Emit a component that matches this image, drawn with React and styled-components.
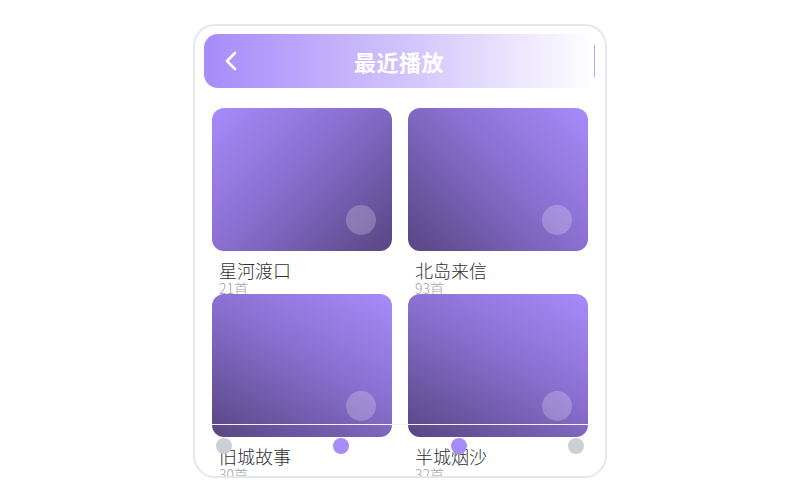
import React from "react";
import styled, { createGlobalStyle } from "styled-components";

const GlobalStyle = createGlobalStyle`
  body {
    margin: 0;
    background: #ffffff;
    font-family: "Noto Sans CJK SC", "Noto Sans", sans-serif;
  }
`;

const Phone = styled.div`
  position: relative;
  box-sizing: border-box;
  width: 414px;
  height: 454px;
  margin: 24px auto 0;
  padding: 8px 9px 0;
  border: 2px solid #e5e7eb;
  border-radius: 22px;
  background: #fff;
  overflow: hidden;
`;

const Header = styled.header`
  display: flex;
  align-items: center;
  height: 54px;
  padding: 0 0 0 17px;
  border-radius: 14px;
  background: linear-gradient(90deg, #a78bfa 0%, #d4c8fc 55%, #ffffff 100%);
`;

const BackButton = styled.button`
  display: flex;
  align-items: center;
  justify-content: center;
  width: 20px;
  height: 24px;
  padding: 0;
  border: 0;
  background: transparent;
  cursor: pointer;
`;

const Title = styled.h1`
  flex: 1;
  margin: 0 17px 0 -20px;
  color: #fff;
  font-size: 22px;
  font-weight: 700;
  text-align: center;
  letter-spacing: 0.5px;
`;

const EdgeMark = styled.span`
  width: 1px;
  height: 32px;
  margin-right: 1px;
  background: #b8a5f8;
`;

const Grid = styled.div`
  display: grid;
  grid-template-columns: 1fr 1fr;
  grid-auto-rows: 170px;
  column-gap: 16px;
  row-gap: 16px;
  margin-top: 20px;
  padding: 0 8px;
`;

const Item = styled.div`
  position: relative;
`;

const Cover = styled.div`
  position: relative;
  height: 143px;
  border-radius: 12px;
  background: linear-gradient(${p => p.$angle}deg, #a78bfa 0%, #8a6fd0 45%, #574683 100%);
`;

const PlayDot = styled.span`
  position: absolute;
  right: 16px;
  bottom: 16px;
  width: 30px;
  height: 30px;
  border-radius: 50%;
  background: rgba(255, 255, 255, 0.22);
`;

const Name = styled.div`
  margin-top: 9px;
  padding-left: 7px;
  color: #2f2f33;
  font-size: 18px;
  font-weight: 300;
  line-height: 21px;
`;

const Count = styled.div`
  padding-left: 7px;
  color: #9ca3af;
  font-size: 14px;
  font-weight: 300;
  line-height: 14px;
`;

const DotBar = styled.nav`
  position: absolute;
  left: 12px;
  right: 12px;
  bottom: 0;
  box-sizing: border-box;
  height: 52px;
  display: flex;
  justify-content: space-between;
  align-items: flex-start;
  padding: 13px 9px 0;
  border-top: 1px solid #f3f2f7;
`;

const Dot = styled.span`
  width: 16px;
  height: 16px;
  border-radius: 50%;
  background: ${p => (p.$active ? "#a78bfa" : "#cbd0d6")};
`;

const playlists = [
  { name: "星河渡口", count: 21, angle: 135 },
  { name: "北岛来信", count: 93, angle: 225 },
  { name: "旧城故事", count: 30, angle: 210 },
  { name: "半城烟沙", count: 32, angle: 210 }
];

const dots = [false, true, true, false];

function App() {
  return (
    <>
      <GlobalStyle />
      <Phone>
        <Header>
          <BackButton aria-label="返回">
            <svg width="14" height="20" viewBox="0 0 14 20" fill="none">
              <polyline
                points="11,2 3,10 11,18"
                stroke="#fff"
                strokeWidth="2.6"
                strokeLinecap="round"
                strokeLinejoin="round"
              />
            </svg>
          </BackButton>
          <Title>最近播放</Title>
          <EdgeMark />
        </Header>
        <Grid>
          {playlists.map(p => (
            <Item key={p.name}>
              <Cover $angle={p.angle}>
                <PlayDot />
              </Cover>
              <Name>{p.name}</Name>
              <Count>{p.count}首</Count>
            </Item>
          ))}
        </Grid>
        <DotBar>
          {dots.map((on, i) => (
            <Dot key={i} $active={on} />
          ))}
        </DotBar>
      </Phone>
    </>
  );
}

export default App;
